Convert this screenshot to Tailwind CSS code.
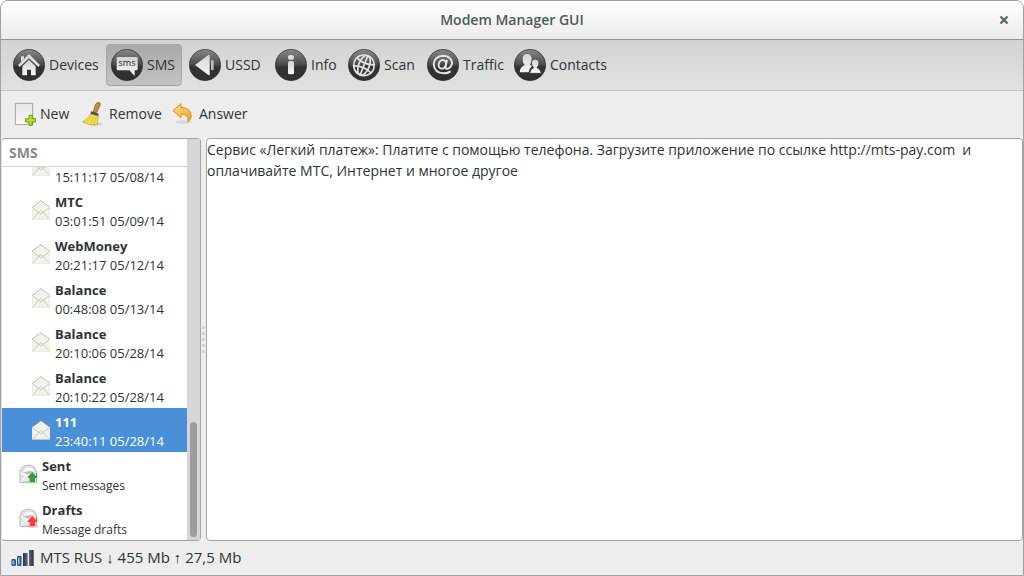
<!DOCTYPE html>
<html lang="en">
<head>
<meta charset="utf-8">
<title>Modem Manager GUI</title>
<script src="https://cdn.jsdelivr.net/npm/@tailwindcss/browser@4"></script>
</head>
<body class="h-screen bg-white font-['Open_Sans','Noto_Sans',sans-serif] text-sm text-[#2e3436]">
<svg width="0" height="0" class="absolute" aria-hidden="true">
  <defs>
    <linearGradient id="disc" x1="0" y1="0" x2="0" y2="1"><stop offset="0" stop-color="#8a8a8a"/><stop offset=".48" stop-color="#4c4c4c"/><stop offset=".56" stop-color="#333"/><stop offset="1" stop-color="#303030"/></linearGradient>
    <linearGradient id="glyph" x1="0" y1="0" x2="0" y2="1"><stop offset="0" stop-color="#d4d4d4"/><stop offset="1" stop-color="#f8f8f8"/></linearGradient>
    <linearGradient id="paper" x1="0" y1="0" x2="0" y2="1"><stop offset="0" stop-color="#e6e6e6"/><stop offset="1" stop-color="#f8f8f8"/></linearGradient>
    <linearGradient id="gold" x1="0" y1="0" x2="1" y2="1"><stop offset="0" stop-color="#fde08a"/><stop offset="1" stop-color="#f3a52c"/></linearGradient>
    <linearGradient id="bar" x1="0" y1="0" x2="1" y2="0"><stop offset="0" stop-color="#2f343d"/><stop offset=".5" stop-color="#6c717b"/><stop offset="1" stop-color="#2b2f38"/></linearGradient>
    <symbol id="base" viewBox="0 0 96 96"><circle cx="48" cy="48" r="47" fill="url(#disc)" stroke="#2b2b2b" stroke-width="2"/></symbol>
    <symbol id="mail" viewBox="0 0 54 60">
      <path d="M0 22 27 2 54 22V58H0Z" fill="#f3f3ea"/>
      <path d="M0 22 27 2 54 22" fill="none" stroke="#8b8b86" stroke-width="2.5" stroke-dasharray="4 2"/>
      <path d="M0 22V58H54V22" fill="none" stroke="#deded4" stroke-width="2"/>
      <path d="M3 24 27 42 51 24M3 56 20 37M51 56 34 37M20 37 27 32 34 37" fill="none" stroke="#b4b4ad" stroke-width="2"/>
    </symbol>
    <symbol id="folder" viewBox="0 0 60 60">
      <path d="M3 25Q6 5 28 3Q49 4 53 25V53L3 56Z" fill="#e6e6e6" stroke="#a9a9a9" stroke-width="2.5"/>
      <path d="M10 24 17 11Q29 7 41 11L49 24 28 36Z" fill="#f7f7f7" stroke="#cfcfcf" stroke-width="2"/>
      <path d="M14 25 32 21 46 24 28 33Z" fill="#bcbcbc"/>
      <path d="M5 52 24 34M5 27 24 35 34 31" fill="none" stroke="#fff" stroke-width="3"/>
      <path d="M53 27V42" stroke="#777" stroke-width="3"/>
      <ellipse cx="40" cy="56" rx="19" ry="4" fill="currentColor" opacity=".25"/>
      <path d="M40 24 53 38V42H48V54H32V42H27V38Z" fill="currentColor"/>
    </symbol>
  </defs>
</svg>
<div class="flex h-full flex-col overflow-hidden rounded-t-lg border border-[#a1a1a1] bg-[#ededed]">
  <header class="relative flex h-[39px] shrink-0 items-center justify-center border-b border-[#949694] bg-linear-to-b from-white to-[#ebebeb]">
    <h1 class="text-sm font-semibold text-[#4e5a5e]">Modem Manager GUI</h1>
    <button aria-label="Close" class="absolute right-[14px] top-[14px] flex size-[10px] items-center justify-center">
      <svg viewBox="0 0 10 10" class="size-[10px]"><path d="M1.5 1.5 8.5 8.5M8.5 1.5 1.5 8.5" stroke="#56666b" stroke-width="2.2"/></svg>
    </button>
  </header>

  <nav class="flex h-[51px] shrink-0 items-center gap-0.5 border-b border-[#c6c8c5] bg-linear-to-b from-[#d1d3d0] via-[#d9dbd8] to-[#e1e3e0] pl-[7px]">
    <button class="flex h-[42px] w-24 items-center gap-1 rounded-sm border border-transparent pl-1">
      <svg viewBox="0 0 96 96" class="size-8 shrink-0"><use href="#base"/><path d="M15 48 48 15 81 48 76 54 48 27 20 54Z" fill="#dedede"/><path d="M24 22H33V30L24 39Z" fill="#dcdcdc"/><path d="M28 52 48 33 68 52V79H54V62H42V79H28Z" fill="url(#glyph)"/></svg>Devices</button>
    <button aria-pressed="true" class="flex h-[42px] w-19 items-center gap-1 rounded-sm border border-[#a5a8a4] bg-linear-to-b from-[#a7aaa7] to-[#c1c4c0] pl-1">
      <svg viewBox="0 0 96 96" class="size-8 shrink-0"><use href="#base"/><path d="M21 24H76Q80 24 80 28V60Q80 64 76 64H71V81L55 64H21Q17 64 17 60V28Q17 24 21 24Z" fill="url(#glyph)"/><text x="48" y="51" text-anchor="middle" font-size="27" font-family="Open Sans" fill="#222">sms</text></svg>SMS</button>
    <button class="flex h-[42px] w-21 items-center gap-1 rounded-sm border border-transparent pl-1">
      <svg viewBox="0 0 96 96" class="size-8 shrink-0"><use href="#base"/><path d="M18 48 58 18Q62 16 62 21V76Q62 80 58 78Z" fill="url(#glyph)"/><rect x="66" y="33" width="8" height="31" rx="4" fill="#bfbfbf"/></svg>USSD</button>
    <button class="flex h-[42px] w-[71px] items-center gap-1 rounded-sm border border-transparent pl-1">
      <svg viewBox="0 0 96 96" class="size-8 shrink-0"><use href="#base"/><rect x="39" y="18" width="18" height="14" rx="6" fill="#ddd"/><rect x="39" y="36" width="18" height="40" rx="5" fill="url(#glyph)"/></svg>Info</button>
    <button class="flex h-[42px] w-[77px] items-center gap-1 rounded-sm border border-transparent pl-1">
      <svg viewBox="0 0 96 96" class="size-8 shrink-0"><use href="#base"/><g fill="none" stroke="#e2e2e2" stroke-width="5" transform="rotate(22 48 49)"><circle cx="48" cy="49" r="31"/><ellipse cx="48" cy="49" rx="16" ry="31"/><path d="M48 18V80M20 36Q48 48 76 36M20 62Q48 50 76 62"/></g></svg>Scan</button>
    <button class="flex h-[42px] w-[85px] items-center gap-1 rounded-sm border border-transparent pl-1">
      <svg viewBox="0 0 96 96" class="size-8 shrink-0"><use href="#base"/><g fill="none" stroke="#e4e4e4" stroke-width="6"><ellipse cx="46" cy="46" rx="11" ry="13" transform="rotate(20 46 46)"/><path d="M60 32 55 55Q56 62 65 58Q76 51 75 40Q71 21 48 20Q22 22 20 45Q22 72 50 73Q62 73 71 67"/></g></svg>Traffic</button>
    <button class="flex h-[42px] items-center gap-1 rounded-sm border border-transparent pl-1 pr-1">
      <svg viewBox="0 0 96 96" class="size-8 shrink-0"><use href="#base"/><path d="M17 70Q18 54 32 49Q25 41 26 28Q28 15 39 15Q51 15 53 28Q54 39 48 47L54 51Q46 58 44 70Z" fill="url(#glyph)"/><path d="M47 73Q48 60 59 56Q51 49 52 40Q54 30 63 30Q74 30 75 40Q76 50 69 56Q80 60 82 73Z" fill="url(#glyph)" stroke="#383838" stroke-width="2.5"/></svg>Contacts</button>
  </nav>

  <div role="toolbar" class="flex h-[47px] shrink-0 items-center gap-[11px] pb-0.5 pl-[11px]">
    <button class="flex w-[58px] items-center gap-1">
      <svg viewBox="0 0 72 72" class="size-6 shrink-0"><path d="M10 4H62V68H10Z" fill="url(#paper)" stroke="#a0a3a5" stroke-width="3"/><path d="M51 40H61V50H71V60H61V70H51V60H41V50H51Z" fill="#b4d83a" stroke="#719a16" stroke-width="3"/></svg>New</button>
    <button class="flex w-[79px] items-center gap-1">
      <svg viewBox="0 0 72 72" class="size-6 shrink-0"><ellipse cx="42" cy="66" rx="22" ry="5" fill="#d2d2d2"/><path d="M36 30 44 6Q50-2 57 3Q60 10 53 18L46 34Z" fill="#c08a42" stroke="#8d5a20" stroke-width="2"/><path d="M29 36 52 43Q48 57 49 68Q27 72 5 60Q20 52 29 36Z" fill="#f3e14e" stroke="#b89c1c" stroke-width="2"/><path d="M31 42Q25 54 17 61M38 44Q34 58 28 65M45 46Q40 57 40 68" fill="none" stroke="#cbb02c" stroke-width="2"/><path d="M31 28 53 35 52 42 28 35Z" fill="#52534a"/></svg>Remove</button>
    <button class="flex items-center gap-1">
      <svg viewBox="0 0 72 72" class="size-6 shrink-0"><ellipse cx="38" cy="60" rx="24" ry="5" fill="#d8d8d8"/><path d="M6 26 30 5V16Q59 17 61 43Q59 54 51 59Q55 37 30 36V47Z" fill="url(#gold)" stroke="#d98b16" stroke-width="3" stroke-linejoin="round"/></svg>Answer</button>
  </div>

  <main class="flex min-h-0 flex-1">
    <section class="flex w-[200px] shrink-0 rounded-sm border border-[#a4a6a4] border-l-[#e0e0e0] bg-white">
      <div class="flex min-w-0 flex-1 flex-col">
        <h2 class="h-7 shrink-0 border-b border-[#d2d3d2] pl-[7px] text-sm leading-7 font-bold text-[#8b8b86]">SMS</h2>
        <ul class="flex min-h-0 flex-1 flex-col justify-end overflow-hidden text-[13px] leading-[19px]">
          <li class="flex h-11 shrink-0 items-center gap-[5px] pl-[30px]"><svg class="h-5 w-[18px] shrink-0"><use href="#mail"/></svg><div class="pt-[3px]"><b class="block">Balance</b>15:11:17 05/08/14</div></li>
          <li class="flex h-11 shrink-0 items-center gap-[5px] pl-[30px]"><svg class="h-5 w-[18px] shrink-0"><use href="#mail"/></svg><div class="pt-[3px]"><b class="block">MTC</b>03:01:51 05/09/14</div></li>
          <li class="flex h-11 shrink-0 items-center gap-[5px] pl-[30px]"><svg class="h-5 w-[18px] shrink-0"><use href="#mail"/></svg><div class="pt-[3px]"><b class="block">WebMoney</b>20:21:17 05/12/14</div></li>
          <li class="flex h-11 shrink-0 items-center gap-[5px] pl-[30px]"><svg class="h-5 w-[18px] shrink-0"><use href="#mail"/></svg><div class="pt-[3px]"><b class="block">Balance</b>00:48:08 05/13/14</div></li>
          <li class="flex h-11 shrink-0 items-center gap-[5px] pl-[30px]"><svg class="h-5 w-[18px] shrink-0"><use href="#mail"/></svg><div class="pt-[3px]"><b class="block">Balance</b>20:10:06 05/28/14</div></li>
          <li class="flex h-11 shrink-0 items-center gap-[5px] pl-[30px]"><svg class="h-5 w-[18px] shrink-0"><use href="#mail"/></svg><div class="pt-[3px]"><b class="block">Balance</b>20:10:22 05/28/14</div></li>
          <li aria-current="true" class="flex h-11 shrink-0 items-center gap-[5px] bg-[#4a90d9] pl-[30px] text-white"><svg class="h-5 w-[18px] shrink-0"><use href="#mail"/></svg><div class="pt-[3px]"><b class="block">111</b>23:40:11 05/28/14</div></li>
          <li class="flex h-11 shrink-0 items-center gap-[3px] pl-[17px] text-xs leading-[19px]"><svg class="size-5 shrink-0 text-[#3a9a3c]"><use href="#folder"/></svg><div class="pt-[3px]"><b class="block text-[13px]">Sent</b>Sent messages</div></li>
          <li class="flex h-11 shrink-0 items-center gap-[3px] pl-[17px] text-xs leading-[19px]"><svg class="size-5 shrink-0 text-[#f53b3f]"><use href="#folder"/></svg><div class="pt-[3px]"><b class="block text-[13px]">Drafts</b>Message drafts</div></li>
        </ul>
      </div>
      <div class="flex w-[13px] flex-col justify-end bg-[#d6d6d6] px-[3px] pb-[3px]"><div class="h-[115px] rounded-full bg-[#9b9d9e]"></div></div>
    </section>
    <div role="separator" class="flex w-[5px] shrink-0 flex-col items-center justify-center gap-[3px]">
      <i class="size-[3px] rounded-full bg-[#cfcfcf]"></i><i class="size-[3px] rounded-full bg-[#cfcfcf]"></i><i class="size-[3px] rounded-full bg-[#cfcfcf]"></i><i class="size-[3px] rounded-full bg-[#cfcfcf]"></i><i class="size-[3px] rounded-full bg-[#cfcfcf]"></i>
    </div>
    <textarea aria-label="Message text" spellcheck="false" class="min-w-0 flex-1 resize-none rounded-sm border border-[#a4a6a4] bg-white text-sm leading-[21px] outline-none">Сервис «Легкий платеж»: Платите с помощью телефона. Загрузите приложение по ссылке http://mts-pay.com  и оплачивайте МТС, Интернет и многое другое</textarea>
  </main>

  <footer class="flex h-[34px] shrink-0 items-center gap-[5px] pl-[10px] text-[15px]">
    <svg viewBox="0 0 72 54" class="h-[18px] w-6 shrink-0"><g stroke="#25365c" stroke-width="3"><path d="M3 32H13V49H3Z" fill="#3f8eea"/><path d="M20 23H30V49H20Z" fill="#3f8eea"/></g><path d="M36 12H50V51H36ZM54 3H68V51H54Z" fill="url(#bar)"/><path d="M6 35V46M23 26V46" stroke="#a5d0ff" stroke-width="3"/></svg>
    <span>MTS RUS ↓ 455 Mb ↑ 27,5 Mb</span>
  </footer>
</div>
</body>
</html>
